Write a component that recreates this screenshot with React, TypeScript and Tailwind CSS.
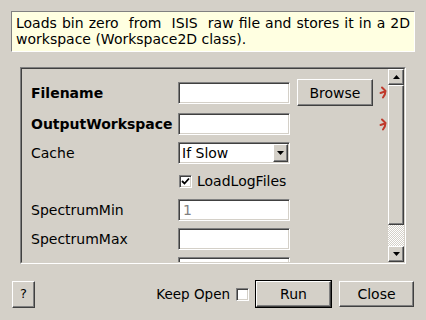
import React from "react";

const raised =
  "border border-t-white border-l-white border-r-[#404040] border-b-[#404040] shadow-[inset_-1px_-1px_0_#808080] bg-[#d4d0c8]";
const sunken =
  "border border-t-[#808080] border-l-[#808080] border-r-white border-b-white shadow-[inset_1px_1px_0_#404040,inset_-1px_-1px_0_#d4d0c8] bg-white";

function Mark() {
  return (
    <svg width="9" height="13" viewBox="0 0 9 13" className="shrink-0">
      <path
        d="M3 1.5 L6.5 5 C6.5 7.5 5.5 9.5 4 11.5 M6 5.5 L1.5 7"
        stroke="#c0392b"
        strokeWidth="2"
        fill="none"
        strokeLinecap="round"
        strokeLinejoin="round"
      />
    </svg>
  );
}

function Input({ value, gray }: { value?: string; gray?: boolean }) {
  return (
    <div className={`${sunken} w-[112px] h-[22px] shrink-0 flex items-center pl-[4px] ${gray ? "text-[#808080]" : "text-black"}`}>
      {value}
    </div>
  );
}

export default function App() {
  return (
    <div
      className="w-[426px] h-[320px] bg-[#d4d0c8] text-black text-[14px] leading-[16px] overflow-hidden flex flex-col"
      style={{ fontFamily: '"DejaVu Sans", sans-serif' }}
    >
      <div className="mt-[11px] ml-[11px] w-[404px] h-[41px] bg-[#ffffe1] border border-t-[#808080] border-l-[#808080] border-r-white border-b-white px-[4px] pt-[3px] text-[14px] whitespace-pre-wrap text-justify">
        {"Loads bin zero  from  ISIS  raw file and stores it in a 2D workspace (Workspace2D class)."}
      </div>

      <div className="mt-[15px] ml-[20px] w-[386px] h-[197px] shrink-0 border border-t-[#808080] border-l-[#808080] border-r-white border-b-white">
        <div className="w-full h-full border border-t-[#404040] border-l-[#404040] border-r-[#d4d0c8] border-b-[#d4d0c8] flex">
          <div className="flex-1 overflow-hidden pl-[9px] pt-[10px] flex flex-col gap-[7px]">
            <div className="flex items-center h-[27px] shrink-0">
              <div className="w-[147px] shrink-0 font-bold">Filename</div>
              <Input />
              <div className={`${raised} ml-[7px] w-[76px] h-[27px] shrink-0 flex items-center justify-center`}>Browse</div>
              <div className="ml-[6px]">
                <Mark />
              </div>
            </div>
            <div className="flex items-center h-[22px] shrink-0">
              <div className="w-[147px] shrink-0 font-bold">OutputWorkspace</div>
              <Input />
              <div className="ml-[89px]">
                <Mark />
              </div>
            </div>
            <div className="flex items-center h-[22px] shrink-0">
              <div className="w-[147px] shrink-0">Cache</div>
              <div className={`${sunken} w-[112px] h-[22px] shrink-0 flex items-center justify-between pl-[3px] pr-[1px]`}>
                <span>If Slow</span>
                <div className={`${raised} w-[15px] h-[18px] flex items-center justify-center`}>
                  <svg width="7" height="4" viewBox="0 0 7 4">
                    <path d="M0 0 H7 L3.5 4 Z" fill="#000" />
                  </svg>
                </div>
              </div>
            </div>
            <div className="flex items-center h-[22px] shrink-0 -mt-px">
              <div className="w-[148px] shrink-0"></div>
              <div className={`${sunken} w-[13px] h-[13px] flex items-center justify-center`}>
                <svg width="9" height="9" viewBox="0 0 9 9">
                  <path d="M1 4 L3.5 6.5 L8 1.5" stroke="#000" strokeWidth="1.8" fill="none" />
                </svg>
              </div>
              <span className="ml-[5px]">LoadLogFiles</span>
            </div>
            <div className="flex items-center h-[22px] shrink-0">
              <div className="w-[147px] shrink-0">SpectrumMin</div>
              <Input value="1" gray />
            </div>
            <div className="flex items-center h-[22px] shrink-0">
              <div className="w-[147px] shrink-0">SpectrumMax</div>
              <Input />
            </div>
            <div className="flex items-center h-[22px] shrink-0">
              <div className="w-[147px] shrink-0">SpectrumList</div>
              <Input />
            </div>
          </div>
          <div className="w-[16px] h-full flex flex-col shrink-0">
            <div className={`${raised} h-[16px] shrink-0 flex items-center justify-center`}>
              <svg width="7" height="4" viewBox="0 0 7 4">
                <path d="M0 4 H7 L3.5 0 Z" fill="#000" />
              </svg>
            </div>
            <div className={`${raised} h-[140px] shrink-0`}></div>
            <div className="flex-1 bg-[repeating-conic-gradient(#ffffff_0%_25%,#d4d0c8_0%_50%)] bg-[length:2px_2px]"></div>
            <div className={`${raised} h-[16px] shrink-0 flex items-center justify-center`}>
              <svg width="7" height="4" viewBox="0 0 7 4">
                <path d="M0 0 H7 L3.5 4 Z" fill="#000" />
              </svg>
            </div>
          </div>
        </div>
      </div>

      <div className="mt-[16px] h-[28px] flex items-center pl-[12px] pr-[12px]">
        <div className={`${raised} w-[23px] h-[27px] flex items-center justify-center text-[13px]`}>?</div>
        <div className="flex-1"></div>
        <span className="text-[13.5px]">Keep Open</span>
        <div className={`${sunken} ml-[6px] w-[13px] h-[13px]`}></div>
        <div className="ml-[6px] w-[77px] h-[28px] border border-black">
          <div className={`${raised} w-full h-full flex items-center justify-center`}>Run</div>
        </div>
        <div className={`${raised} ml-[7px] w-[75px] h-[26px] flex items-center justify-center`}>Close</div>
      </div>
    </div>
  );
}
